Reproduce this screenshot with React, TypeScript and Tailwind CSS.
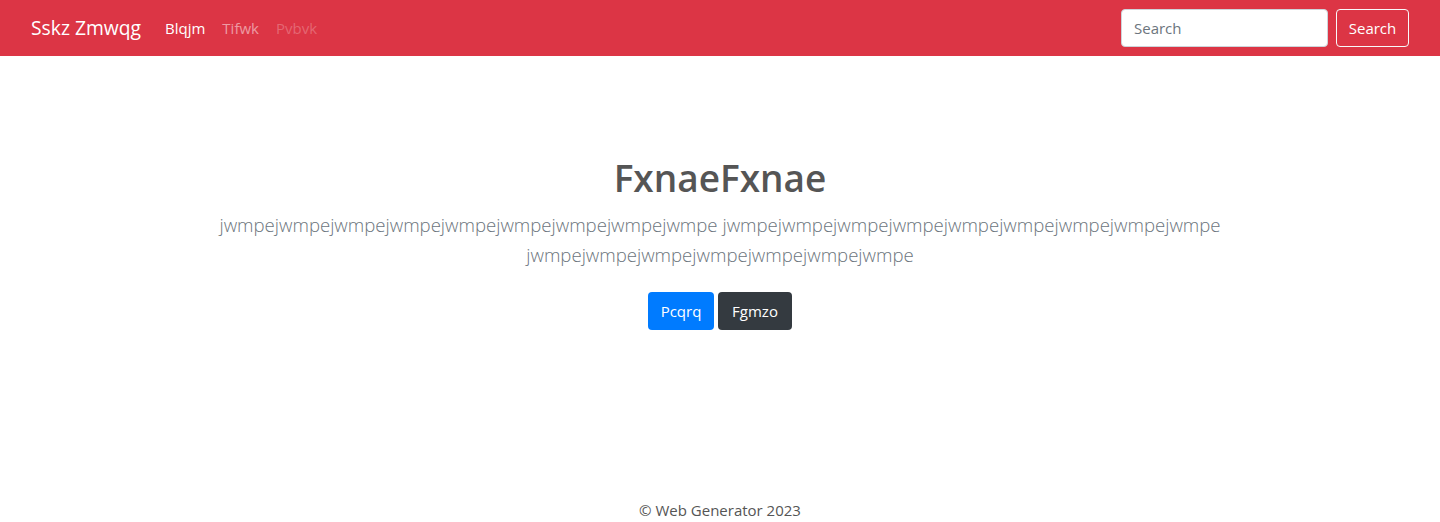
import React from "react";

export default function App() {
  const w = "jwmpe";
  const word1 = w.repeat(9);
  const word2 = w.repeat(9);
  const word3 = w.repeat(7);
  return (
    <div
      className="min-h-screen flex flex-col bg-white text-[#212529]"
      style={{ fontFamily: '"Open Sans", "Noto Sans", "Liberation Sans", sans-serif' }}
    >
      <nav className="h-[56px] bg-[#dc3545] flex items-center pl-[31px] pr-[31px]">
        <a className="text-[19.3px] text-white mr-[24px] leading-[30px]">Sskz Zmwqg</a>
        <div className="flex items-center gap-[17px] text-[15px]">
          <a className="text-white">Blqjm</a>
          <a className="text-white/50">Tifwk</a>
          <a className="text-white/25">Pvbvk</a>
        </div>
        <div className="ml-auto flex items-center gap-[8px]">
          <input
            placeholder="Search"
            className="w-[207px] h-[38px] rounded-[4px] border border-[#ced4da] bg-white px-[12px] text-[15px] text-[#495057] placeholder:text-[#6c757d] outline-none"
          />
          <button className="w-[73px] h-[38px] rounded-[4px] border border-[#f8f9fa] text-white text-[15px]">
            Search
          </button>
        </div>
      </nav>
      <main className="flex-1 flex flex-col items-center pt-[98px]">
        <div className="w-[1110px] text-center">
          <h1 className="text-[37px] leading-[48px] font-semibold text-[#555] mb-[8px]">FxnaeFxnae</h1>
          <p className="text-[18.6px] leading-[30px] font-light text-[#6c757d]">
            {word1} {word2} {word3}
          </p>
          <div className="mt-[22px] flex justify-center gap-[4px]">
            <button className="w-[66px] h-[38px] rounded-[4px] bg-[#007bff] text-white text-[15px]">Pcqrq</button>
            <button className="w-[74px] h-[38px] rounded-[4px] bg-[#343a40] text-white text-[15px]">Fgmzo</button>
          </div>
        </div>
      </main>
      <footer className="text-center text-[15px] text-[#555] leading-[24px]">
        © Web Generator 2023
      </footer>
    </div>
  );
}
